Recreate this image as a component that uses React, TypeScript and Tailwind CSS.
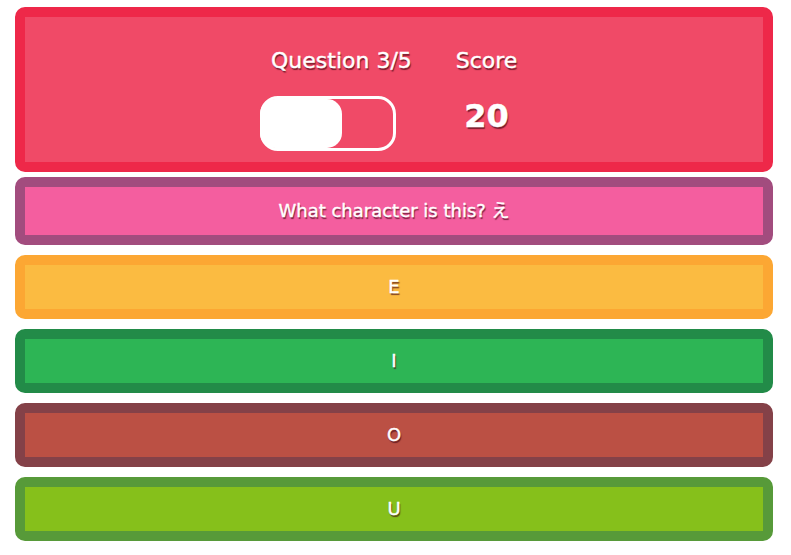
import React from 'react';

const shadow = '[text-shadow:1px_2px_1px_rgba(70,10,20,0.7)] [-webkit-text-stroke:0.4px_white]';

type Choice = { label: string; border: string; fill: string };

const choices: Choice[] = [
  { label: 'E', border: 'border-[#fca733]', fill: 'bg-[#fbbb41]' },
  { label: 'I', border: 'border-[#228b48]', fill: 'bg-[#2db555]' },
  { label: 'O', border: 'border-[#844148]', fill: 'bg-[#bb5044]' },
  { label: 'U', border: 'border-[#579a39]', fill: 'bg-[#86c01b]' },
];

function Progress() {
  return (
    <div className="w-[136px] h-[55px] border-[3px] border-white rounded-[18px] flex items-center">
      <div className="w-[82px] h-[49px] -ml-[3px] bg-white rounded-[15px]" />
    </div>
  );
}

export default function App() {
  return (
    <div
      className="w-[791px] h-[555px] bg-white px-[15px] pt-[7px] text-white"
      style={{ fontFamily: '"DejaVu Sans", Verdana, "Noto Sans CJK JP", sans-serif' }}
    >
      {/* header: question counter + score */}
      <div className="w-[758px] h-[165px] rounded-[10px] border-[10px] border-[#ee2849] bg-[#f04a67]">
        <div className="flex justify-center gap-[40px] pr-[10px] pt-[31px]">
          <div className="w-[155px] flex flex-col items-start">
            <span className={`ml-[11px] text-[22px] leading-[26px] whitespace-nowrap ${shadow}`}>Question 3/5</span>
            <div className="mt-[22px]">
              <Progress />
            </div>
          </div>
          <div className="w-[63px] flex flex-col items-center">
            <span className={`text-[22px] leading-[26px] ${shadow}`}>Score</span>
            <span className={`mt-[22px] text-[32px] leading-[40px] font-bold ${shadow}`}>20</span>
          </div>
        </div>
      </div>

      {/* prompt */}
      <div className="mt-[5px] w-[758px] h-[68px] rounded-[10px] border-[10px] border-[#a24c7e] bg-[#f45e9f] flex items-center justify-center">
        <span className={`text-[18px] leading-[22px] ${shadow}`}>What character is this? え</span>
      </div>

      {/* answers */}
      {choices.map((c) => (
        <div
          key={c.label}
          className={`mt-[10px] w-[758px] h-[64px] rounded-[10px] border-[10px] ${c.border} ${c.fill} flex items-center justify-center`}
        >
          <span className={`text-[18px] leading-[22px] ${shadow}`}>{c.label}</span>
        </div>
      ))}
    </div>
  );
}
